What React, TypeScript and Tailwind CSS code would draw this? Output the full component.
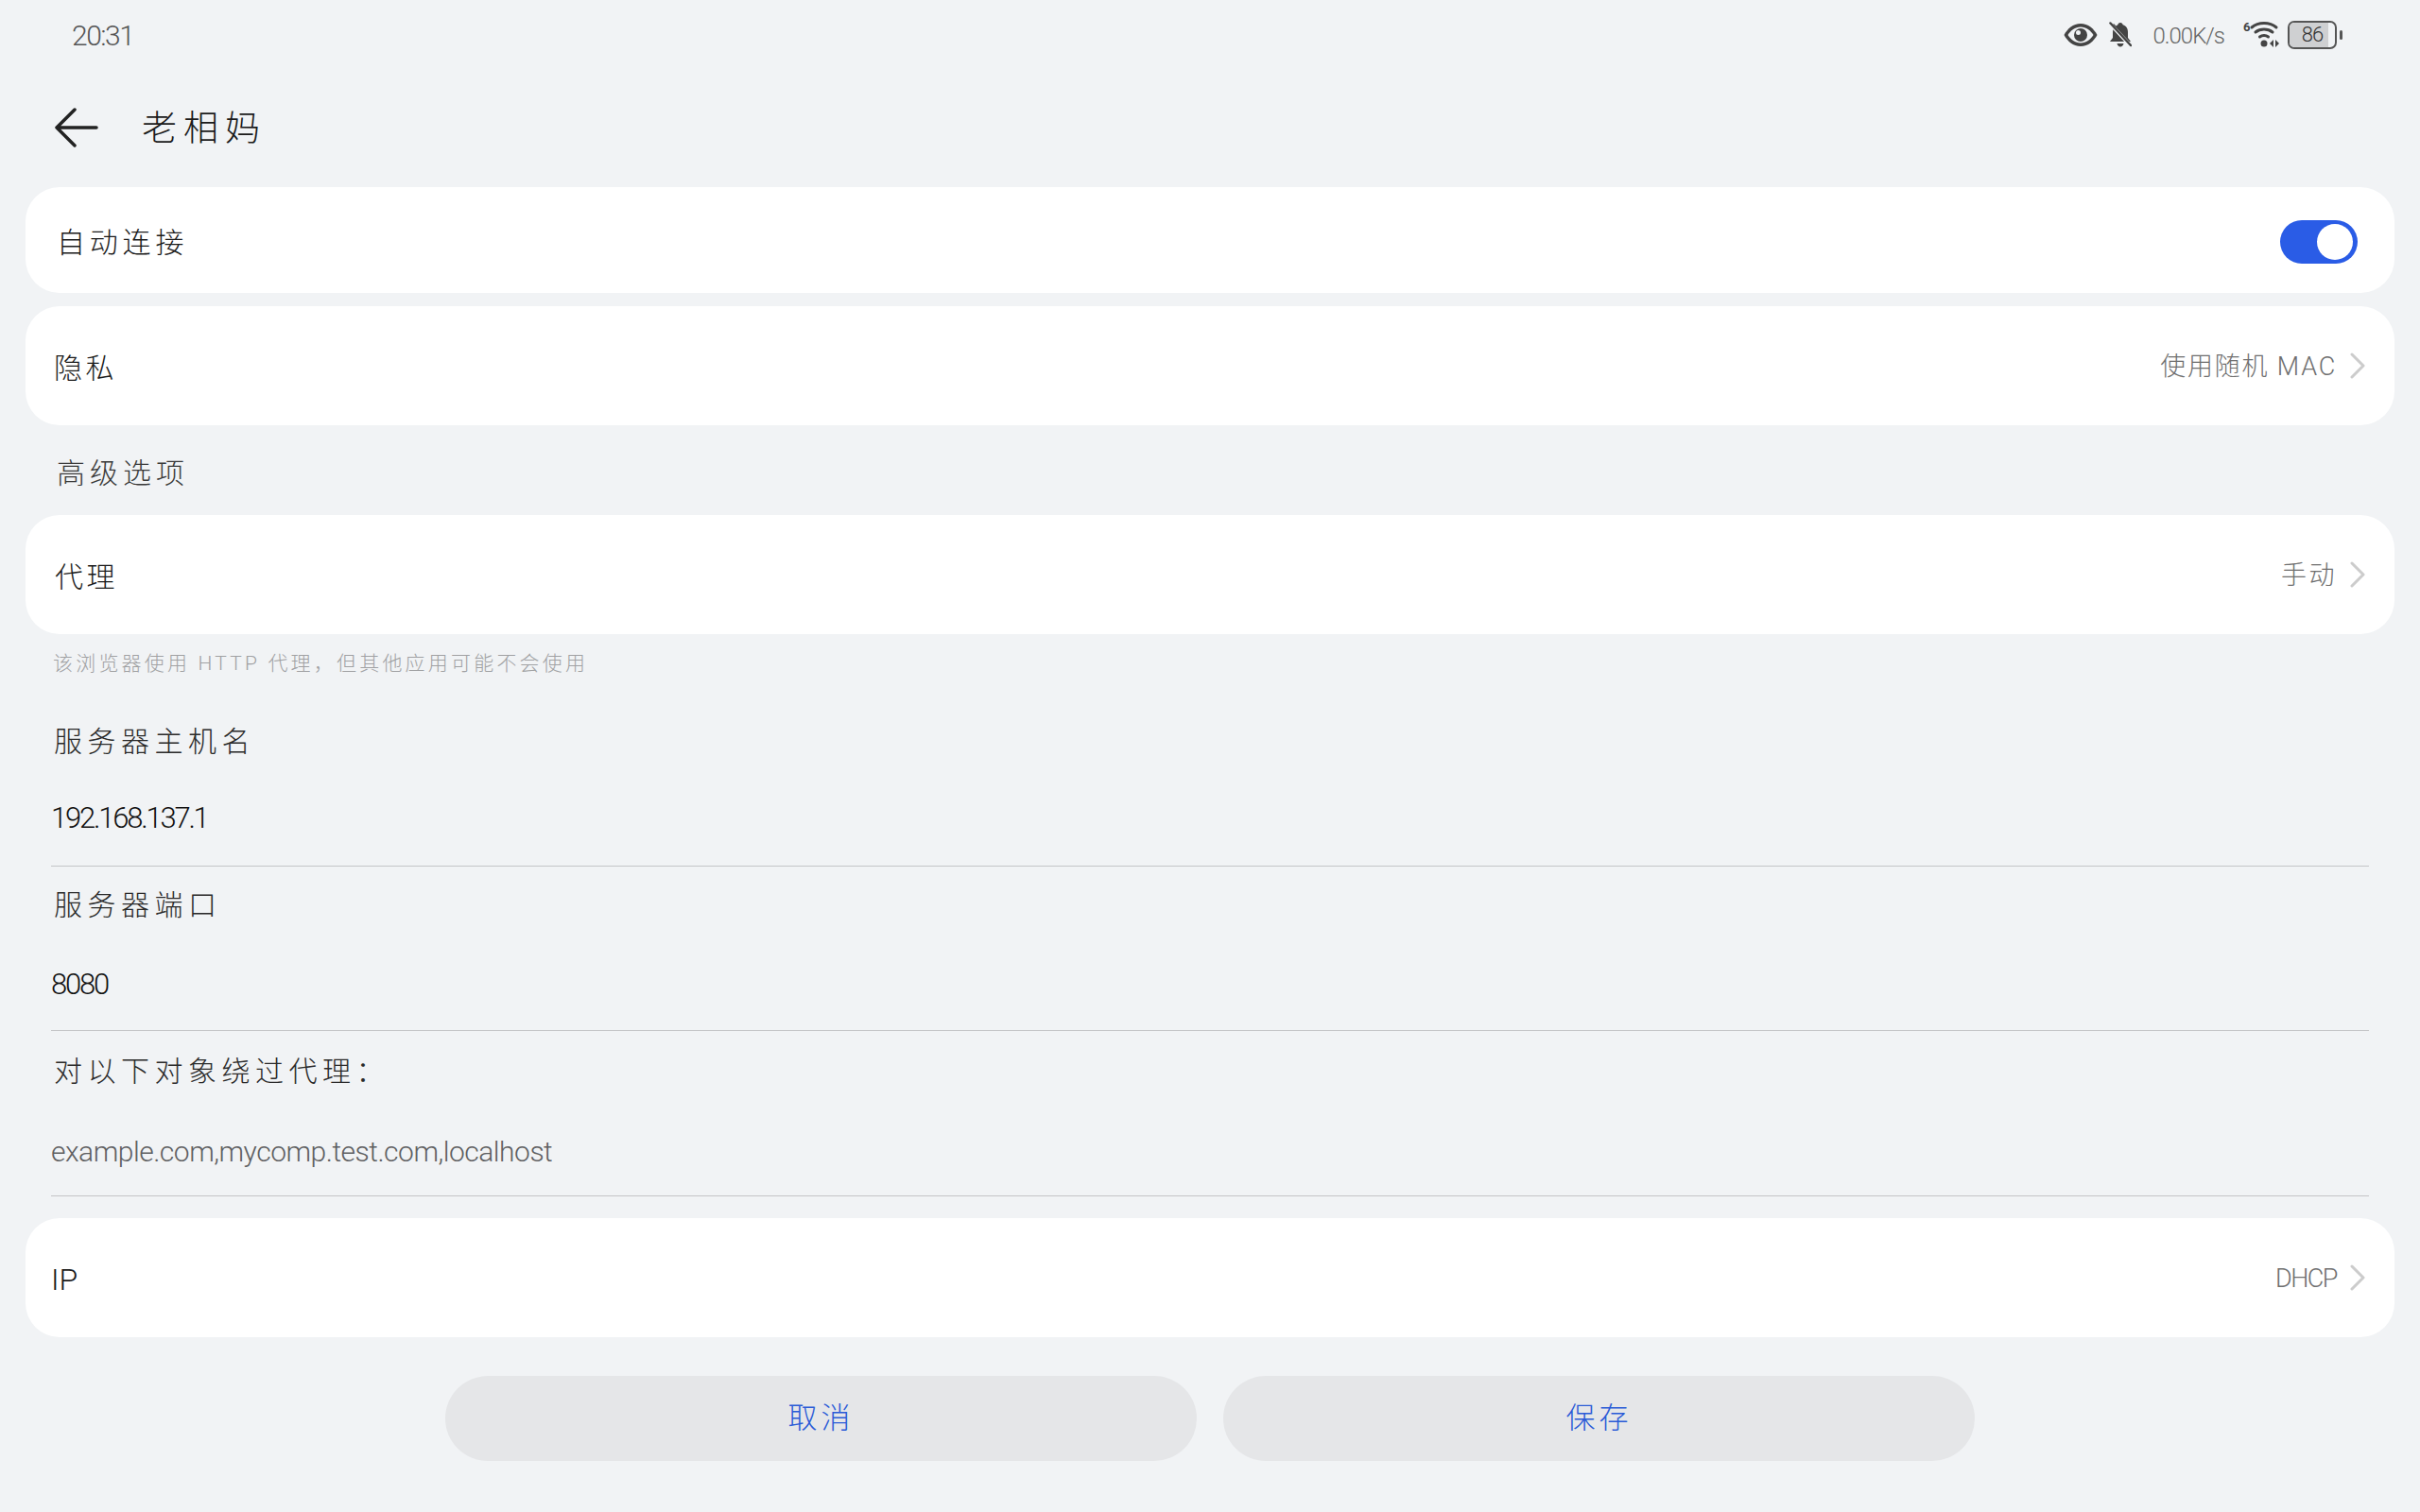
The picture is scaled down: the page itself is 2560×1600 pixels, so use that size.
import { ReactNode } from "react";

const cjk = "font-['Roboto','Noto_Sans_CJK_SC',sans-serif] font-light";

const Chevron = () => (
  <svg width="16" height="28" viewBox="0 0 16 28" fill="none" className="ml-[14px]">
    <path d="M2 2l12 12L2 26" stroke="#cccccc" strokeWidth="3" strokeLinecap="round" strokeLinejoin="round" />
  </svg>
);

const Card = ({
  label,
  value,
  labelClass,
  valueClass,
}: {
  label: string;
  value: string;
  labelClass: string;
  valueClass: string;
}) => (
  <div className="mx-[27px] flex h-[126px] items-center justify-between rounded-[36px] bg-white pr-[31px]">
    <span className={`pt-[4px] text-[#1b1b1b] ${labelClass}`}>{label}</span>
    <span className="flex items-center">
      <span className={`pt-[2px] text-[27px] text-[#6f6f6f] ${valueClass}`}>{value}</span>
      <Chevron />
    </span>
  </div>
);

const Field = ({
  label,
  value,
  muted,
  labelH,
  valueH,
  pad,
}: {
  label: string;
  value: string;
  muted?: boolean;
  labelH: string;
  valueH: string;
  pad: string;
}) => (
  <div className={`mx-[54px] border-b border-[#c4c5c7] ${pad}`}>
    <div className={`flex items-center pl-[3px] text-[30px] tracking-[5.500px] text-[#2a2a2a] ${labelH}`}>{label}</div>
    <div
      className={
        muted
          ? `flex items-center text-[30px] tracking-[-0.5px] text-[#5f6062] ${valueH}`
          : `flex items-center text-[31px] tracking-[-2.2px] text-[#111111] ${valueH}`
      }
    >
      {value}
    </div>
  </div>
);

const Button = ({ children }: { children: ReactNode }) => (
  <button className="flex h-[90px] w-[795px] items-center justify-center rounded-full bg-[#e5e6e8] text-[31px] tracking-[4px] text-[#2a5bd7]">
    {children}
  </button>
);

const StatusIcons = () => (
  <div className="flex items-center pt-[1px]">
    <svg width="36" height="26" viewBox="0 0 36 26" className="mr-[12px]">
      <path
        d="M18 1C10 1 4 6.5 0.5 13 4 19.5 10 25 18 25s14-5.500 17.500-12C32 6.500 26 1 18 1z"
        fill="#444444"
      />
      <path d="M18 4.500C12 4.500 7.500 8.500 4.500 13c3 4.500 7.500 8.500 13.500 8.500S28.500 17.500 31.500 13C28.500 8.500 24 4.500 18 4.500z" fill="#f1f3f5" />
      <circle cx="18" cy="13" r="7" fill="#444444" />
      <circle cx="15.500" cy="10.500" r="2.500" fill="#f1f3f5" />
    </svg>
    <svg width="24" height="28" viewBox="0 0 24 28" className="mr-[22px]">
      <path d="M12 1c1.600 0 2.500 1 2.700 2.300C18.500 4.500 20 7.500 20 11v6l3 4H1l3-4v-6c0-1.800.4-3.300 1.100-4.600L3 4l2-2 2.500 2.500C8 4 8.800 3.600 9.300 3.300 9.500 2 10.400 1 12 1z" fill="#444444" />
      <path d="M8.500 23h7c-.4 2-1.800 3.500-3.500 3.500S8.900 25 8.500 23z" fill="#444444" />
      <path d="M1.500 2.500L22.500 25" stroke="#f1f3f5" strokeWidth="4" />
      <path d="M1.500 1.500L23 25" stroke="#444444" strokeWidth="2.500" strokeLinecap="round" />
    </svg>
    <span className="mr-[20px] pt-[3px] text-[24px] tracking-[-1px] text-[#666666]">0.00K/s</span>
    <svg width="40" height="30" viewBox="0 0 40 30" className="mr-[7px]">
      <text x="0" y="11" fontSize="13" fontWeight="700" fill="#444444" fontFamily="Roboto, sans-serif">6</text>
      <path d="M9 7c7-6 19-6 26 0M13 12c5-4 13-4 18 0M17.500 17c2.500-2 6.500-2 9 0" fill="none" stroke="#444444" strokeWidth="3" strokeLinecap="round" />
      <circle cx="22" cy="24" r="3.500" fill="#444444" />
      <path d="M32 20v8l-4-4zM34 20v8l4-4z" fill="#444444" />
    </svg>
    <div className="relative flex h-[30px] w-[52px] items-center justify-center overflow-hidden rounded-[7px] border-2 border-[#555555] bg-[#f1f3f5] text-[22px] tracking-[-1px] text-[#333333]">
      <div className="absolute inset-y-0 left-0 w-[86%] bg-[#cfd0d2]" />
      <span className="relative">86</span>
    </div>
    <div className="ml-[3px] h-[10px] w-[3px] rounded-sm bg-[#555555]" />
  </div>
);

export default function App() {
  return (
    <div className={`h-[1600px] w-[2560px] overflow-hidden bg-[#f1f3f5] ${cjk}`}>
      <div className="flex h-[72px] items-center justify-between pl-[76px] pr-[82px]">
        <span className="pt-[3px] text-[30px] tracking-[-1.500px] text-[#555555]">20:31</span>
        <StatusIcons />
      </div>

      <div className="flex h-[126px] items-center pl-[58px]">
        <svg width="46" height="42" viewBox="0 0 46 42" fill="none" className="mr-[46px]">
          <path d="M44 21H2M21 2L2 21l19 19" stroke="#222222" strokeWidth="3.500" strokeLinecap="round" strokeLinejoin="round" />
        </svg>
        <span className="pt-[4px] text-[37px] tracking-[7px] text-[#1b1b1b]">老相妈</span>
      </div>

      <div className="mx-[27px] mb-[14px] flex h-[112px] items-center justify-between rounded-[36px] bg-white pl-[33px] pr-[39px]">
        <span className="pt-[4px] text-[30px] tracking-[4.800px] text-[#1b1b1b]">自动连接</span>
        <div className="mt-[4px] flex h-[46px] w-[82px] items-center justify-end rounded-full bg-[#2a5ce6] pr-[5px]">
          <div className="h-[38px] w-[38px] rounded-full bg-white" />
        </div>
      </div>

      <Card
        label="隐私"
        value="使用随机 MAC"
        labelClass="pl-[30px] text-[30px] tracking-[3.500px]"
        valueClass="tracking-[1.800px]"
      />

      <div className="flex h-[95px] items-center pl-[60px] pt-[5px] text-[30px] tracking-[5px] text-[#3a3a3a]">高级选项</div>

      <Card
        label="代理"
        value="手动"
        labelClass="pl-[31px] text-[30px] tracking-[3.500px]"
        valueClass="tracking-[2.500px]"
      />

      <div className="flex h-[64px] items-center pl-[56px] text-[21px] tracking-[3.200px] text-[#a0a1a3]">
        该浏览器使用 HTTP 代理，但其他应用可能不会使用
      </div>

      <Field label="服务器主机名" value="192.168.137.1" labelH="h-[98px]" valueH="h-[66px]" pad="pb-[17px]" />
      <Field label="服务器端口" value="8080" labelH="h-[80px]" valueH="h-[90px]" pad="pb-[3px]" />
      <Field
        label="对以下对象绕过代理："
        value="example.com,mycomp.test.com,localhost"
        muted
        labelH="h-[84px]"
        valueH="h-[86px]"
        pad="pb-[4px]"
      />

      <div className="mt-[23px]">
        <Card
          label="IP"
          value="DHCP"
          labelClass="pl-[27px] text-[32px] tracking-[0px]"
          valueClass="tracking-[-1.500px]"
        />
      </div>

      <div className="mt-[41px] flex justify-center gap-[28px]">
        <Button>取消</Button>
        <Button>保存</Button>
      </div>
    </div>
  );
}
